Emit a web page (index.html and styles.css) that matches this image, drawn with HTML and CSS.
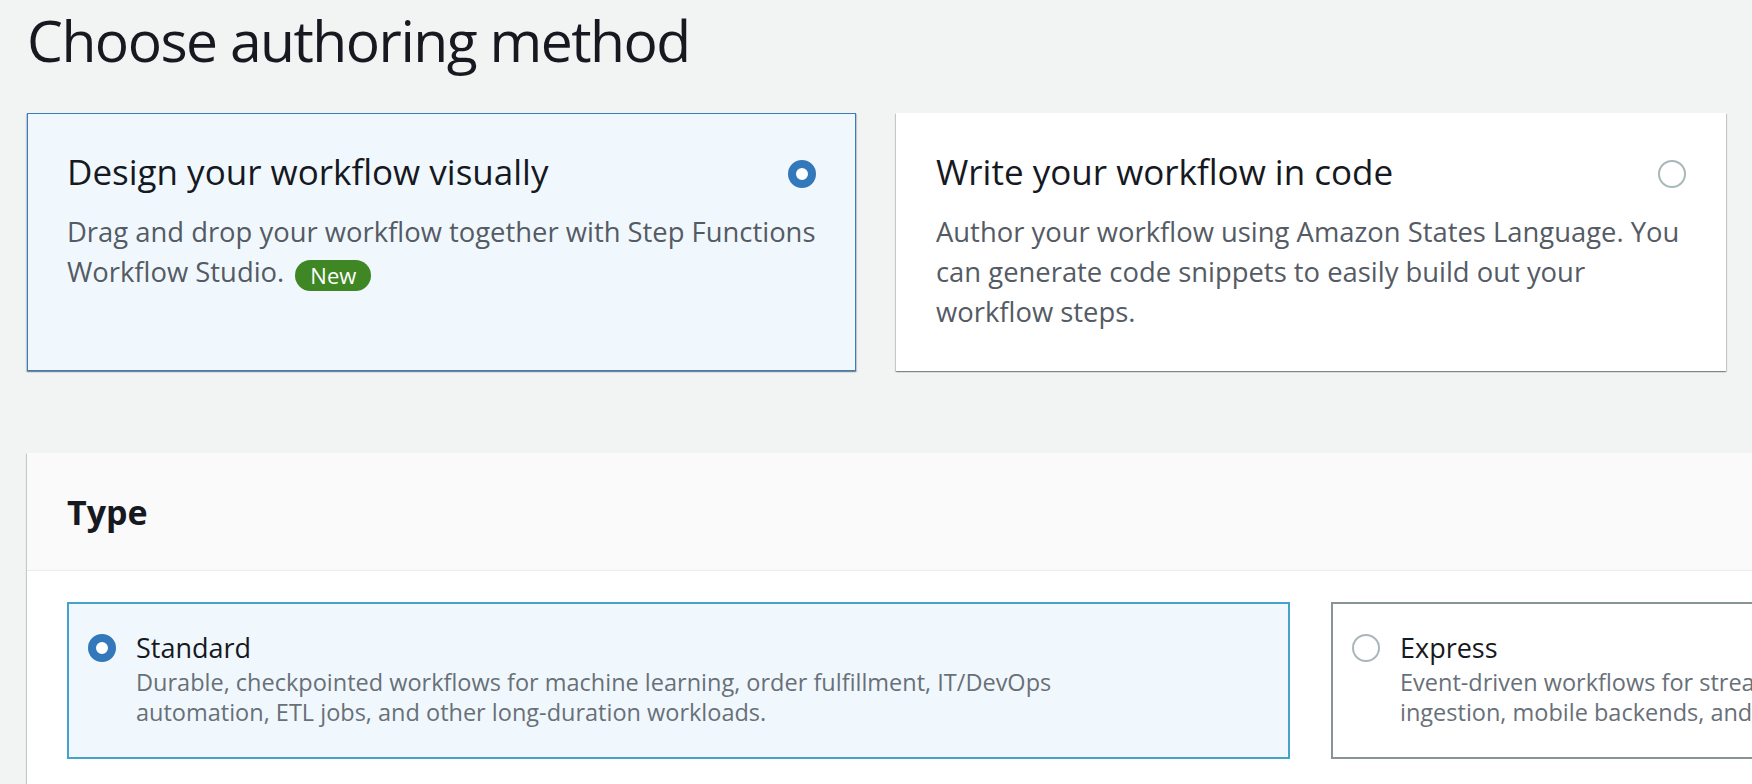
FILE: index.html
```html
<!DOCTYPE html>
<html lang="en">
<head>
<meta charset="utf-8">
<title>Choose authoring method</title>
<link rel="stylesheet" href="styles.css">
</head>
<body>
<main class="page">
  <h1 class="page-title">Choose authoring method</h1>

  <div class="method-grid">
    <div class="tile tile-selected">
      <div class="tile-head">
        <h2 class="tile-title">Design your workflow visually</h2>
        <span class="radio radio-on"></span>
      </div>
      <p class="tile-desc">Drag and drop your workflow together with Step Functions<br>Workflow Studio. <span class="badge">New</span></p>
    </div>
    <div class="tile">
      <div class="tile-head">
        <h2 class="tile-title">Write your workflow in code</h2>
        <span class="radio radio-off"></span>
      </div>
      <p class="tile-desc">Author your workflow using Amazon States Language. You<br>can generate code snippets to easily build out your<br>workflow steps.</p>
    </div>
  </div>

  <section class="panel">
    <header class="panel-header">
      <h2 class="panel-title">Type</h2>
    </header>
    <div class="panel-body">
      <div class="option option-selected">
        <span class="radio radio-on"></span>
        <div class="option-text">
          <div class="option-title">Standard</div>
          <div class="option-desc">Durable, checkpointed workflows for machine learning, order fulfillment, IT/DevOps<br>automation, ETL jobs, and other long-duration workloads.</div>
        </div>
      </div>
      <div class="option">
        <span class="radio radio-off"></span>
        <div class="option-text">
          <div class="option-title">Express</div>
          <div class="option-desc">Event-driven workflows for streaming data processing, IoT data<br>ingestion, mobile backends, and other short-duration, high-event-rate workloads.</div>
        </div>
      </div>
    </div>
  </section>
</main>
</body>
</html>
```

FILE: styles.css
```css
* { box-sizing: border-box; }

html, body {
  margin: 0;
  padding: 0;
  background: #f2f3f3;
  overflow: hidden;
}

body {
  font-family: "Open Sans", "Noto Sans", sans-serif;
  color: #16191f;
  width: 1752px;
  height: 784px;
}

.page {
  padding: 6px 0 0 27px;
}

.page-title {
  margin: 0;
  font-size: 57px;
  line-height: 69px;
  font-weight: 400;
  letter-spacing: -1.5px;
  color: #16191f;
}

.method-grid {
  margin-top: 38px;
  display: grid;
  grid-template-columns: 829px 830px;
  column-gap: 40px;
  width: 1699px;
}

.tile {
  background: #ffffff;
  border: 1px solid transparent;
  padding: 36px 39px 38px 39px;
  box-shadow: 0 1px 1px 0 rgba(0, 28, 36, 0.3), 1px 1px 1px 0 rgba(0, 28, 36, 0.15), -1px 1px 1px 0 rgba(0, 28, 36, 0.15);
}

.tile-selected {
  background: #f1f8fd;
  border-color: #3a7cbf;
}

.tile-head {
  display: flex;
  align-items: center;
  justify-content: space-between;
}

.tile-title {
  margin: 0;
  font-size: 35px;
  line-height: 44px;
  font-weight: 400;
  color: #16191f;
}

.tile-head .radio {
  margin-top: 4px;
}

.tile-desc {
  margin: 18px 0 0 0;
  font-size: 27.4px;
  line-height: 40px;
  color: #545b64;
}

.badge {
  display: inline-block;
  vertical-align: middle;
  position: relative;
  top: 1px;
  height: 31px;
  line-height: 31px;
  padding: 0 15px;
  margin-left: 4px;
  border-radius: 16px;
  background: #3f8624;
  color: #ffffff;
  font-size: 22px;
  font-weight: 500;
}

.radio {
  display: inline-block;
  flex: none;
  width: 28px;
  height: 28px;
  border-radius: 50%;
}

.radio-on {
  border: 8px solid #3278bb;
  background: #ffffff;
}

.radio-off {
  border: 2px solid #aab7b8;
  background: #ffffff;
}

.panel {
  margin-top: 82px;
  width: 2567px;
  background: #ffffff;
  box-shadow: 0 1px 1px 0 rgba(0, 28, 36, 0.3), 1px 1px 1px 0 rgba(0, 28, 36, 0.15), -1px 1px 1px 0 rgba(0, 28, 36, 0.15);
}

.panel-header {
  background: #fafafa;
  border-bottom: 1px solid #eaeded;
  padding: 38px 40px 37px 40px;
}

.panel-title {
  margin: 0;
  font-size: 34px;
  line-height: 42px;
  font-weight: 700;
  color: #16191f;
}

.panel-body {
  padding: 31px 40px 40px 40px;
  display: grid;
  grid-template-columns: 1223px 1223px;
  column-gap: 41px;
}

.option {
  display: flex;
  align-items: flex-start;
  gap: 20px;
  border: 2px solid #879596;
  background: #ffffff;
  padding: 27px 19px 30px 19px;
}

.option-selected {
  border-color: #45a2cb;
  background: #f1f8fd;
}

.option .radio {
  margin-top: 3px;
}

.option-title {
  font-size: 27px;
  line-height: 34px;
  color: #16191f;
}

.option-desc {
  margin-top: 2px;
  font-size: 23.5px;
  line-height: 30px;
  color: #687078;
}
```
